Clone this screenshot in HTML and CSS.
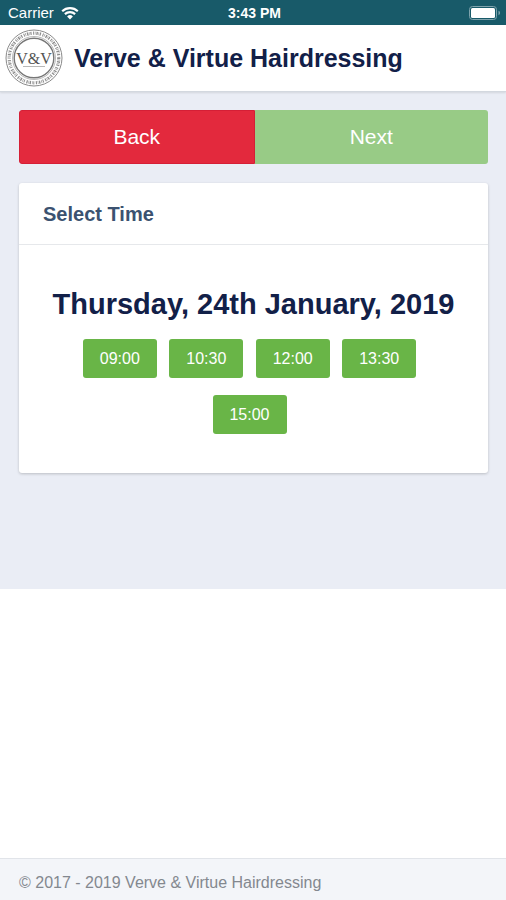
FILE: index.html
```html
<!DOCTYPE html>
<html lang="en">
<head>
    <meta charset="UTF-8">
    <meta name="viewport" content="width=device-width, initial-scale=1.0">
    <title>Verve &amp; Virtue Hairdressing</title>
    <link rel="stylesheet" href="styles.css">
</head>
<body>
    <!-- Status bar -->
    <div class="status-bar">
        <div class="carrier">
            <span>Carrier</span>
            <svg class="wifi" viewBox="0 0 18 14" width="18" height="14" aria-hidden="true">
                <path d="M1.2 5.2a11.5 11.5 0 0 1 15.6 0M3.9 8.1a7.5 7.5 0 0 1 10.2 0" fill="none" stroke="#fff" stroke-width="2.2"/>
                <path d="M9 13.4 6.1 10.4a4.2 4.2 0 0 1 5.8 0z" fill="#fff"/>
            </svg>
        </div>
        <span class="clock">3:43 PM</span>
        <div class="battery">
            <svg viewBox="0 0 32 14" width="32" height="14" aria-hidden="true">
                <rect x="0.5" y="0.5" width="27" height="13" rx="3" fill="none" stroke="#7fa3ad"/>
                <rect x="2" y="2" width="24" height="10" rx="1.5" fill="#fff"/>
                <path d="M29.5 4.8c2 .5 2 3.9 0 4.4z" fill="#7fa3ad"/>
            </svg>
        </div>
    </div>

    <!-- Header -->
    <header class="header">
        <svg class="logo" viewBox="0 0 58 58" width="58" height="58" role="img" aria-label="V&amp;V">
            <circle cx="29" cy="29" r="28" fill="none" stroke="#8a8a8a" stroke-width="1"/>
            <!-- lettering band -->
            <circle cx="29" cy="29" r="24.8" fill="none" stroke="#8c8c8c" stroke-width="3.2" stroke-dasharray="1 0.8 0.6 1 1.4 0.7 0.5 0.8 1.2 1.6"/>
            <circle cx="29" cy="29" r="21.5" fill="none" stroke="#999" stroke-width="0.7"/>
            <circle cx="29" cy="29" r="19.8" fill="none" stroke="#777" stroke-width="1.4"/>
            <text class="logo-text" x="29" y="35" text-anchor="middle">V&amp;V</text>
            <path d="M18 37.5h22" stroke="#999" stroke-width="0.7"/>
        </svg>
        <h1>Verve &amp; Virtue Hairdressing</h1>
    </header>

    <!-- Booking -->
    <main class="content">
        <div class="nav-buttons">
            <button type="button" class="btn-back">Back</button>
            <button type="button" class="btn-next" disabled>Next</button>
        </div>

        <section class="card">
            <h2 class="card-header">Select Time</h2>
            <div class="card-body">
                <h3>Thursday, 24th January, 2019</h3>
                <div class="times">
                    <button type="button" class="btn-time">09:00</button>
                    <button type="button" class="btn-time">10:30</button>
                    <button type="button" class="btn-time">12:00</button>
                    <button type="button" class="btn-time">13:30</button>
                    <button type="button" class="btn-time">15:00</button>
                </div>
            </div>
        </section>
    </main>

    <footer class="footer">© 2017 - 2019 Verve &amp; Virtue Hairdressing</footer>
</body>
</html>
```
FILE: styles.css
```css
* {
    box-sizing: border-box;
}
body {
    display: flex;
    flex-direction: column;
    min-height: 100vh;
    margin: 0;
    font-family: "Liberation Sans", Arial, sans-serif;
    font-size: 16px;
    color: #122048;
    background-color: #fff;
}
h1, h2, h3 {
    margin: 0;
}
button {
    font-family: inherit;
    color: #fff;
    border: none;
}

/* Status bar */
.status-bar {
    display: grid;
    grid-template-columns: 1fr auto 1fr;
    align-items: center;
    height: 25px;
    padding: 0 5px 0 8px;
    font-size: 14px;
    color: #fff;
    background-color: #185a69;
}
.carrier {
    display: flex;
    align-items: center;
    gap: 7px;
    font-size: 15px;
}
.clock {
    font-weight: bold;
}
.battery {
    display: flex;
    justify-content: flex-end;
}

/* Header */
.header {
    display: flex;
    align-items: center;
    gap: 11px;
    padding: 4px 5px;
    background-color: #fff;
    border-bottom: 1px solid #d3d8df;
    box-shadow: 0 1px 2px rgba(0, 0, 0, 0.1);
    z-index: 1;
}
.header h1 {
    font-size: 25px;
    line-height: 30px;
}
.logo {
    flex-shrink: 0;
}
.logo-text {
    font-family: "Liberation Serif", serif;
    font-size: 16px;
    fill: #555;
}

/* Booking */
.content {
    padding: 18px 18px 116px 19px;
    background-color: #eaedf5;
}
.nav-buttons {
    display: flex;
    margin-bottom: 19px;
}
.nav-buttons button {
    flex: 1 1 0;
    height: 54px;
    padding: 0;
    font-size: 21px;
}
.nav-buttons .btn-back {
    background-color: #e3293d;
    border: 1px solid #d51f36;
    border-radius: 3px 0 0 3px;
}
.nav-buttons .btn-next {
    background-color: #98cb86;
    border-radius: 0 3px 3px 0;
}
.card {
    background-color: #fff;
    border-radius: 3px;
    box-shadow: 0 1px 3px rgba(0, 0, 0, 0.2);
}
.card-header {
    padding: 18px 24px 17px;
    font-size: 20px;
    line-height: 26px;
    color: #3b5270;
    border-bottom: 1px solid #e6e8eb;
}
.card-body {
    padding: 41px 24px 22px;
    text-align: center;
}
.card-body h3 {
    margin-bottom: 17px;
    font-size: 29px;
    line-height: 36px;
}
.btn-time {
    width: 74px;
    height: 39px;
    margin: 0 8px 17px 0;
    padding: 0;
    font-size: 16px;
    background-color: #69b547;
    border-radius: 3px;
}

/* Footer */
.footer {
    margin-top: auto;
    padding: 14px 19px 7px;
    font-size: 16px;
    line-height: 20px;
    color: #83888f;
    background-color: #f3f5f9;
    border-top: 1px solid #e1e4e9;
}
```
